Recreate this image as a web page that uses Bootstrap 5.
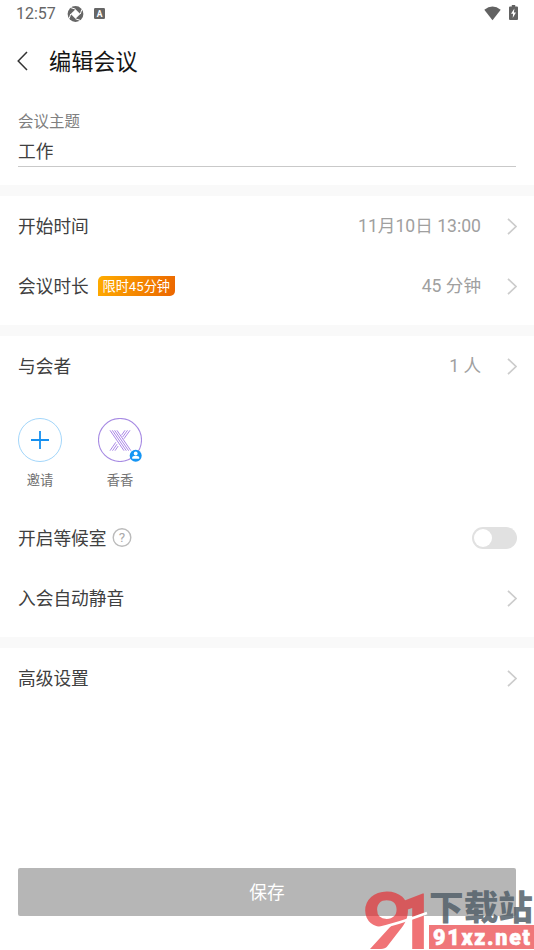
<!DOCTYPE html>
<html lang="zh-CN">
<head>
<meta charset="utf-8">
<meta name="viewport" content="width=device-width, initial-scale=1">
<title>编辑会议</title>
<link href="https://cdn.jsdelivr.net/npm/bootstrap@5.3.0/dist/css/bootstrap.min.css" rel="stylesheet">
<style>
body{font-family:Roboto,"Noto Sans CJK SC",sans-serif;font-size:17.7px;line-height:1.2;color:#404040;background:#fff}
.screen{height:950px;overflow:hidden}
svg{display:block;flex:none}
.status{height:28px;padding:0 16px 0 16px;color:#666;font-size:16px}
.app-icon{margin-left:11px}
.lang-icon{margin-left:10px}
.battery{margin-left:8px}
.signal,.battery{margin-bottom:2px}
.topbar{height:66px;padding-left:17px;color:#151515}
.topbar h1{font-size:22.2px;font-weight:400;margin:2px 0 0 21px}
.topic{height:91px;padding:17px 18px 0}
.topic label{font-size:15.5px;color:#808080;height:22px;line-height:22px}
.topic .field{height:34px;line-height:38px;border-bottom:1px solid #c9c9c9}
.band{height:11px;background:#f9f9f9}
.band-gap{margin-top:9px}
.line{height:60px;padding:0 17px 0 18px}
.line>span:not(.limit){padding-top:3px}
.line>span.val{padding-top:2px}
.val{color:#a0a0a0;margin-right:26px;font-size:17.6px}
.limit{height:20px;width:77px;padding-top:2px;margin-left:9px;font-size:13.2px;color:#fff;background:linear-gradient(110deg,#ffad00,#eb6500);border-radius:5px 0 5px 0}
.people{padding:22px 18px 0;height:112px;gap:36px}
.person{width:44px;font-size:13.3px;color:#707070}
.person span{line-height:18px;margin-top:10px;white-space:nowrap}
.help{margin-left:6px}
.toggle{width:45px;height:22px;border-radius:11px;background:#e1e1e1;padding:2px}
.toggle i{width:18px;height:18px;border-radius:50%;background:#fff}
.save{margin:0 18px 34px;height:48px;border-radius:2px;background:#b6b6b6;color:#fff;border:0;font-size:17.7px;padding:2px 0 0}
.stamp{left:360px;top:885px}
</style>
<script src="https://cdn.jsdelivr.net/npm/bootstrap@5.3.0/dist/js/bootstrap.bundle.min.js"></script>
</head>
<body>
<main class="screen d-flex flex-column position-relative">
<div class="status d-flex align-items-center">
  <span>12:57</span>
  <svg class="app-icon" width="17" height="17" viewBox="0 0 17 17"><circle cx="8.500" cy="8" r="7.900" fill="#666"/><path d="M8.500 3.200 13.300 8 8.500 12.800 3.700 8Z" fill="#fff"/><path d="M8.500 3.200 4 1.700M13.300 8 14.800 3.500M8.500 12.800 13 14.300M3.700 8 2.200 12.500" stroke="#fff" stroke-width="1"/></svg>
  <svg class="lang-icon" width="11" height="12" viewBox="0 0 11 12"><rect width="11" height="11" rx="1.200" fill="#666"/><text x="5.500" y="8.500" text-anchor="middle" font-size="8.500" font-weight="700" fill="#fff">A</text></svg>
  <svg class="signal ms-auto" width="17" height="15" viewBox="0 0 17 15"><path d="M.3 3.800Q8.500-2.800 16.700 3.800L8.500 14.300Z" fill="#626262"/></svg>
  <svg class="battery" width="9" height="16" viewBox="0 0 9 16"><path d="M2.800 0h3.400v1.500H8q1 0 1 1V14q0 1-1 1H1q-1 0-1-1V2.500q0-1 1-1h1.800z" fill="#626262"/><path d="M5.400 3.500 2 8.800h2.100L3.700 13 7 7.500H4.900z" fill="#fff"/></svg>
</div>
<header class="topbar d-flex align-items-center">
  <svg width="11" height="20" viewBox="0 0 11 20"><path d="M10 1 1.200 10 10 19" fill="none" stroke="#333" stroke-width="1.500"/></svg>
  <h1>编辑会议</h1>
</header>
<section class="topic"><label class="d-block">会议主题</label><div class="field">工作</div></section>
<div class="band"></div>
<section>
  <div class="line d-flex align-items-center"><span>开始时间</span><span class="val ms-auto">11月10日 13:00</span><svg width="10" height="17" viewBox="0 0 10 17"><path d="M1 .8 9 8.500 1 16.200" fill="none" stroke="#ccc" stroke-width="1.700"/></svg></div>
  <div class="line d-flex align-items-center"><span>会议时长</span><span class="limit d-flex align-items-center justify-content-center">限时45分钟</span><span class="val ms-auto">45 分钟</span><svg width="10" height="17" viewBox="0 0 10 17"><path d="M1 .8 9 8.500 1 16.200" fill="none" stroke="#ccc" stroke-width="1.700"/></svg></div>
</section>
<div class="band band-gap"></div>
<section>
  <div class="line d-flex align-items-center"><span>与会者</span><span class="val ms-auto">1 人</span><svg width="10" height="17" viewBox="0 0 10 17"><path d="M1 .8 9 8.500 1 16.200" fill="none" stroke="#ccc" stroke-width="1.700"/></svg></div>
  <div class="people d-flex">
    <div class="person d-flex flex-column align-items-center">
      <svg width="44" height="44" viewBox="0 0 44 44"><circle cx="22" cy="22" r="21.500" fill="none" stroke="#a3d6fa"/><path d="M22 13v18M13 22h18" stroke="#1590f0" stroke-width="1.800"/></svg><span>邀请</span>
    </div>
    <div class="person d-flex flex-column align-items-center">
      <svg width="44" height="44" viewBox="0 0 44 44"><circle cx="22" cy="22" r="21.500" fill="none" stroke="#a78be3" stroke-width="1.100"/>
      <g fill="none" stroke="#9468e0" stroke-width=".8"><path d="M12 12.300 26 32.700M14.300 12.300 28.300 32.700M16.600 12.300 30.600 32.700M18.900 12.300 32.900 32.700M27 12.300 23.500 17.300M29.500 12.300 24.700 19M32 12.300 25.900 20.800M17.800 24.300 12 32.700M19 26.200 14.500 32.700M20.200 28 17 32.700"/></g>
      <circle cx="37.700" cy="37.700" r="6" fill="#1595f4"/><circle cx="37.700" cy="35.500" r="1.900" fill="#fff"/><path d="M34.200 40.800v-1.200q.3-1.800 3.500-1.800t3.500 1.800v1.200z" fill="#fff"/></svg><span>香香</span>
    </div>
  </div>
  <div class="line d-flex align-items-center"><span>开启等候室</span><svg class="help" width="20" height="20" viewBox="0 0 20 20"><circle cx="10" cy="9.500" r="8.800" fill="none" stroke="#bbb" stroke-width="1.400"/><text x="10" y="14.300" text-anchor="middle" font-size="13.500" fill="#aaa">?</text></svg><div class="toggle ms-auto d-flex" role="switch" aria-checked="false"><i></i></div></div>
  <div class="line d-flex align-items-center"><span>入会自动静音</span><svg class="ms-auto" width="10" height="17" viewBox="0 0 10 17"><path d="M1 .8 9 8.500 1 16.200" fill="none" stroke="#ccc" stroke-width="1.700"/></svg></div>
</section>
<div class="band band-gap"></div>
<section><div class="line d-flex align-items-center"><span>高级设置</span><svg class="ms-auto" width="10" height="17" viewBox="0 0 10 17"><path d="M1 .8 9 8.500 1 16.200" fill="none" stroke="#ccc" stroke-width="1.700"/></svg></div></section>
<button class="save btn mt-auto">保存</button>
<svg class="stamp position-absolute" width="174" height="65" viewBox="0 0 174 65">
  <g font-weight="900" font-size="78" fill="#e8262a" opacity=".64"><text x="2" y="63.500" font-family="Lato,sans-serif" textLength="50" lengthAdjust="spacingAndGlyphs">9</text><text x="35" y="63.500" font-family="Roboto,sans-serif" textLength="41" lengthAdjust="spacingAndGlyphs">1</text></g>
  <path d="M11 45Q38 39 67 28" stroke="#fff" stroke-width="2.500" fill="none"/>
  <rect x="69" y="40" width="105" height="24" fill="#f0777a"/>
  <text x="73" y="59.500" font-size="21.500" textLength="97" fill="#fff" stroke="#fff" stroke-width=".6" font-family="Roboto,sans-serif" font-weight="900">91xz.net</text>
  <text x="69" y="35" font-family="Noto Sans CJK SC,sans-serif" font-weight="900" font-size="34" textLength="104" lengthAdjust="spacingAndGlyphs" fill="#536069" fill-opacity=".85">下载站</text>
</svg>
</main>
</body>
</html>
